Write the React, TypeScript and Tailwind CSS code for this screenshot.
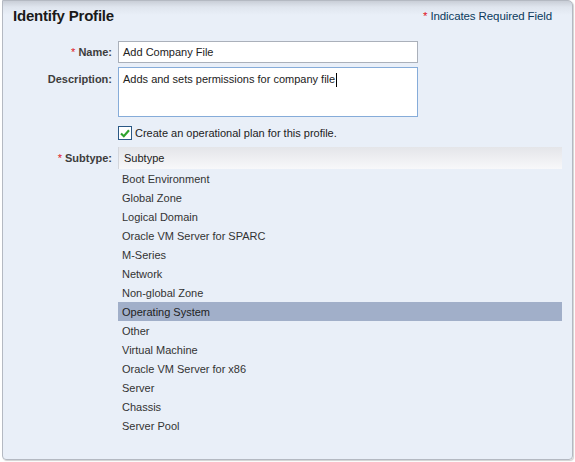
import React from 'react';

const subtypes = [
  'Boot Environment',
  'Global Zone',
  'Logical Domain',
  'Oracle VM Server for SPARC',
  'M-Series',
  'Network',
  'Non-global Zone',
  'Operating System',
  'Other',
  'Virtual Machine',
  'Oracle VM Server for x86',
  'Server',
  'Chassis',
  'Server Pool',
];

const Req = () => <span className="text-[#e0141e] mr-[3px] font-normal">*</span>;

const App: React.FC = () => {
  return (
    <div className="w-[575px] h-[462px] bg-white font-['Liberation_Sans',Arial,sans-serif] text-[11px] text-[#333]">
      <div className="ml-[2px] w-[571px] h-[460px] flex flex-col border border-[#b4b9c2] rounded-tr-[5px] rounded-b-[4px] shadow-[1px_1px_1px_rgba(0,0,0,0.18)] bg-[linear-gradient(to_bottom,#c9ced7_0px,#dfe5ee_6px,#e9eff8_14px,#e9eff8_100%)]">
        {/* Header */}
        <div className="h-[31px] flex items-center justify-between pl-[10px] pr-[20px]">
          <span className="text-[15px] font-bold text-[#1a1a1a] tracking-[-0.2px]">Identify Profile</span>
          <span className="text-[11.5px] text-[#0b3a5c] tracking-[-0.1px]">
            <Req />Indicates Required Field
          </span>
        </div>

        {/* Form */}
        <div className="pt-[9px] grid grid-cols-[109px_1fr] gap-x-[6px]">
          <div className="h-[22px] flex items-center justify-end font-bold text-[#3d3d3d]">
            <Req />Name:
          </div>
          <div className="w-[300px] h-[22px] bg-white border border-[#aab0ba] flex items-center pl-[4px] text-[#222]">
            Add Company File
          </div>

          <div className="mt-[4px] pt-[4px] text-right font-bold text-[#3d3d3d]">Description:</div>
          <div className="mt-[4px] w-[300px] h-[50px] bg-white border border-[#86acd9] pl-[4px] pt-[3px] text-[#222]">
            Adds and sets permissions for company file
            <span className="inline-block align-middle ml-[1px] w-px h-[14px] bg-black" />
          </div>

          <div className="mt-[9px]" />
          <div className="mt-[9px] h-[14px] flex items-center gap-[3px]">
            <span className="w-[14px] h-[14px] bg-white border border-[#2a5885] flex items-center justify-center">
              <svg width="10" height="9" viewBox="0 0 10 9">
                <path d="M1 4.5 L3.8 7.2 L9 1.2" fill="none" stroke="#2ea32e" strokeWidth="2.2" />
              </svg>
            </span>
            <span className="text-[#222]">Create an operational plan for this profile.</span>
          </div>

          <div className="mt-[7px] h-[22px] flex items-center justify-end font-bold text-[#3d3d3d]">
            <Req />Subtype:
          </div>
          <div className="mt-[7px] w-[444px]">
            <div className="h-[22px] flex items-center pl-[5px] text-[#222] border-l border-[#d3d6dc] bg-[linear-gradient(to_bottom,#e4e5e9,#f8f8fa)]">
              Subtype
            </div>
            {subtypes.map((s) => (
              <div
                key={s}
                className={
                  s === 'Operating System'
                    ? 'h-[19px] flex items-center pl-[4px] pt-px bg-[#a1afc9] text-[#222]'
                    : 'h-[19px] flex items-center pl-[4px] pt-px text-[#333]'
                }
              >
                {s}
              </div>
            ))}
          </div>
        </div>
      </div>
    </div>
  );
};

export default App;
